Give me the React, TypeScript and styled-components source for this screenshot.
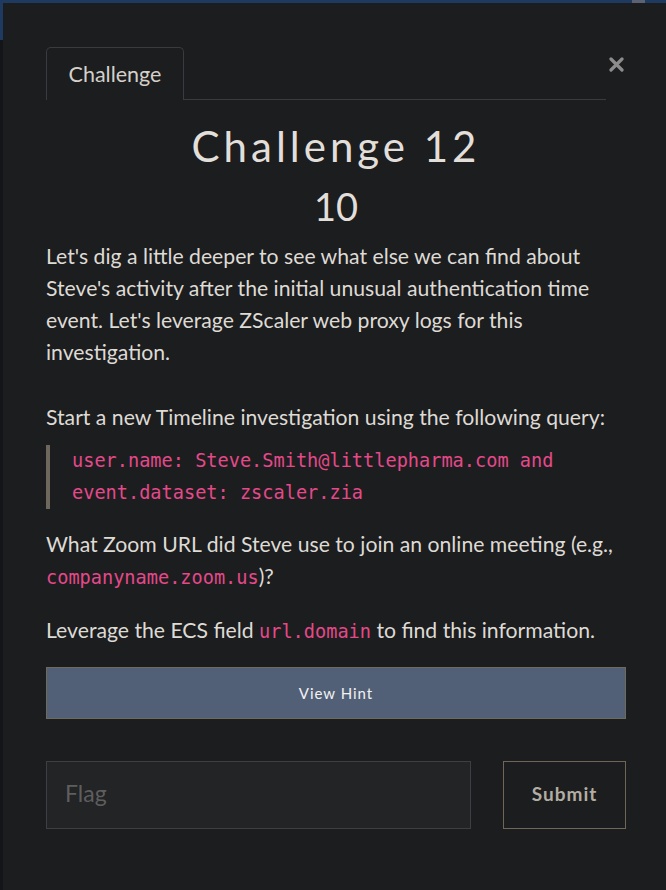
import React from "react";
import styled, { createGlobalStyle } from "styled-components";

const Global = createGlobalStyle`
  html, body { margin: 0; padding: 0; }
  body {
    width: 666px;
    height: 890px;
    overflow: hidden;
    background: #141518;
    font-family: Lato, "Open Sans", sans-serif;
  }
`;

const Page = styled.div`
  position: relative;
  width: 666px;
  height: 890px;
  overflow: hidden;
`;

const NavBar = styled.div`
  height: 40px;
  background: #1f3a60;
  display: flex;
  justify-content: flex-end;
  padding-right: 21px;
`;

const NavThing = styled.div`
  width: 13px;
  height: 10px;
  background: #5a6274;
`;

const Modal = styled.div`
  position: absolute;
  top: 3px;
  left: 3px;
  width: 666px;
  height: 900px;
  box-sizing: border-box;
  background: #1c1d1f;
  padding: 44px 43px 0 43px;
  display: flex;
  flex-direction: column;
`;

const Header = styled.div`
  display: flex;
  align-items: flex-start;
`;

const TabNav = styled.div`
  flex: 1;
  display: flex;
  border-bottom: 1px solid #3a3b3e;
`;

const Tab = styled.div`
  width: 138px;
  height: 53px;
  box-sizing: border-box;
  border: 1px solid #3a3b3e;
  border-bottom: none;
  border-radius: 5px 5px 0 0;
  margin-bottom: -1px;
  background: #1c1d1f;
  display: flex;
  align-items: center;
  justify-content: center;
  color: #d4d0ca;
  font-size: 21.5px;
  padding-bottom: 1px;
`;

const Close = styled.div`
  width: 19px;
  height: 34px;
  display: flex;
  align-items: center;
  justify-content: center;
  margin-left: 1px;
`;

const Title = styled.h1`
  margin: 21px 0 0 0;
  text-align: center;
  font-family: Lato, sans-serif;
  font-weight: 400;
  font-size: 42px;
  line-height: 50px;
  letter-spacing: 4px;
  color: #e2dfda;
`;

const Points = styled.h2`
  margin: 12px 0 0 0;
  text-align: center;
  font-family: Lato, sans-serif;
  font-weight: 400;
  font-size: 38px;
  line-height: 46px;
  color: #e2dfda;
`;

const Body = styled.div`
  margin-top: 11px;
  color: #dedad4;
  font-size: 21.2px;
  line-height: 32px;
`;

const Para = styled.p<{ $mb?: number }>`
  margin: 0 0 ${(p) => (p.$mb ?? 22)}px 0;
`;

const Quote = styled.blockquote`
  margin: 0 0 19px 0;
  border-left: 4px solid #6e675d;
  padding-left: 22px;
`;

const QuoteCode = styled.code`
  display: block;
  font-family: "DejaVu Sans Mono", monospace;
  font-size: 18.6px;
  line-height: 32px;
  color: #e5498a;
`;

const Code = styled.code`
  font-family: "DejaVu Sans Mono", monospace;
  font-size: 18.6px;
  line-height: 0;
  color: #e5498a;
`;

const HintButton = styled.button`
  width: 100%;
  height: 52px;
  box-sizing: border-box;
  background: #526077;
  border: 1px solid #6e6b5c;
  color: #f2f2f2;
  font-family: Lato, sans-serif;
  font-size: 15px;
  letter-spacing: 1px;
  cursor: pointer;
  padding: 0;
`;

const FlagRow = styled.div`
  margin-top: 42px;
  display: flex;
  gap: 32px;
  height: 68px;
`;

const FlagInput = styled.input`
  flex: 1;
  box-sizing: border-box;
  height: 68px;
  background: #232426;
  border: 1px solid #3e3f42;
  padding: 0 18px 4px 18px;
  font-family: Lato, sans-serif;
  font-size: 23px;
  color: #ddd;
  outline: none;
  &::placeholder {
    color: #5e5e5e;
  }
`;

const SubmitButton = styled.button`
  width: 123px;
  height: 68px;
  box-sizing: border-box;
  background: transparent;
  border: 1px solid #6f6657;
  color: #b3ada3;
  font-family: Lato, sans-serif;
  font-weight: 700;
  font-size: 19px;
  letter-spacing: 1px;
  padding: 0 0 4px 0;
`;

export default function App() {
  return (
    <Page>
      <Global />
      <NavBar>
        <NavThing />
      </NavBar>
      <Modal>
        <Header>
          <TabNav>
            <Tab>Challenge</Tab>
          </TabNav>
          <Close>
            <svg width="15" height="15" viewBox="0 0 15 15">
              <path
                d="M2 2 L13 13 M13 2 L2 13"
                stroke="#8c8c8c"
                strokeWidth="3.2"
                strokeLinecap="round"
              />
            </svg>
          </Close>
        </Header>
        <Title>Challenge 12</Title>
        <Points>10</Points>
        <Body>
          <Para $mb={33}>
            Let's dig a little deeper to see what else we can find about Steve's
            activity after the initial unusual authentication time event. Let's
            leverage ZScaler web proxy logs for this investigation.
          </Para>
          <Para $mb={12}>
            Start a new Timeline investigation using the following query:
          </Para>
          <Quote>
            <QuoteCode>user.name: Steve.Smith@littlepharma.com and</QuoteCode>
            <QuoteCode>event.dataset: zscaler.zia</QuoteCode>
          </Quote>
          <Para>
            What Zoom URL did Steve use to join an online meeting (e.g.,{" "}
            <Code>companyname.zoom.us</Code>)?
          </Para>
          <Para $mb={21}>
            Leverage the ECS field <Code>url.domain</Code> to find this
            information.
          </Para>
        </Body>
        <HintButton>View Hint</HintButton>
        <FlagRow>
          <FlagInput placeholder="Flag" />
          <SubmitButton>Submit</SubmitButton>
        </FlagRow>
      </Modal>
    </Page>
  );
}
